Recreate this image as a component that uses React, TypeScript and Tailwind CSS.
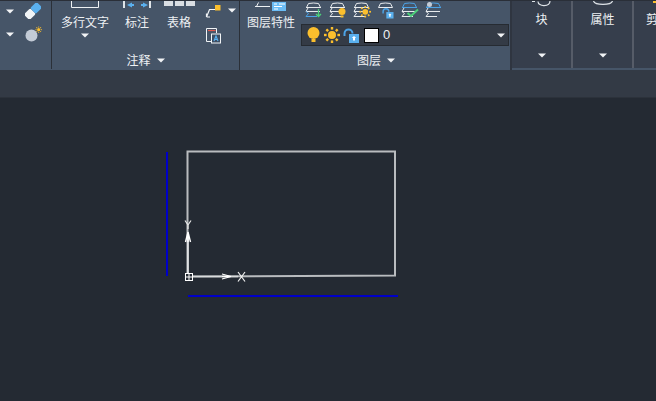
const Caret = ({ c = "" }: { c?: string }) => (
  <svg width="8" height="5" viewBox="0 0 8 5" className={`shrink-0 ${c}`}>
    <path d="M0 0.5H8L4 4.5Z" fill="#f2f4f6" />
  </svg>
);

const LayerBase = ({ blue = false, bottomBlue = false, children }: { blue?: boolean; bottomBlue?: boolean; children?: React.ReactNode }) => (
  <svg width="18" height="16" viewBox="0 0 18 16" className="shrink-0 overflow-visible">
    <path d="M1.5 5.5L3.5 1.5Q8.5 0.5 13.5 1.5L15.5 5.5" fill="none" stroke={blue ? "#4ca3e6" : "#e8ebee"} strokeWidth="1" />
    <path d="M1 5.5H16" stroke={blue ? "#4ca3e6" : "#e8ebee"} strokeWidth="1" />
    <path d="M1 9.5H15M1 9.5L3 6" stroke="#e8ebee" strokeWidth="1" fill="none" />
    <path d="M1 9.5L3.5 11.5M3.5 11.5L1 14.5H12" fill="none" stroke={bottomBlue ? "#4ca3e6" : "#e8ebee"} strokeWidth="1" />
    {children}
  </svg>
);

const Sun = () => (
  <g>
    <circle cx="8" cy="8" r="4" fill="#fbbf2d" />
    {[0, 45, 90, 135, 180, 225, 270, 315].map((a) => (
      <rect key={a} x="6.8" y="0" width="2.4" height="2.6" fill="#fbbf2d" transform={`rotate(${a} 8 8)`} />
    ))}
  </g>
);

const Lock = () => (
  <>
    <path d="M1.5 9V6.5C1.5 1 9.5 1 9.5 6.5" fill="none" stroke="#4ca3e6" strokeWidth="2" />
    <rect x="6" y="7" width="10" height="9" fill="#5ab0ee" />
    <path d="M11 9L13.2 11H12V13.5H10V11H8.8Z" fill="#fff" />
  </>
);

function App() {
  return (
    <div className="flex h-[401px] w-[656px] flex-col overflow-hidden bg-[#242a33] font-['Noto_Sans_CJK_SC','Noto_Sans',sans-serif] text-[12px] leading-[16px] text-[#eef1f4]">
      <div className="flex h-[70px] shrink-0 overflow-hidden border-t border-[#2a2f38] bg-[#465568]">
        <div className="flex h-[68px] w-[52px] shrink-0 flex-col border-r border-[#2b3038] pl-[6px]">
          <div className="flex h-[20px] items-center gap-[11px]">
            <Caret />
            <svg width="16" height="16" viewBox="0 0 16 16">
              <g transform="rotate(-45 8 8)">
                <rect x="-1" y="4" width="9" height="8" rx="1.5" fill="#f1f4f6" />
                <rect x="8" y="4" width="9" height="8" rx="1.5" fill="#5ab0ee" />
              </g>
            </svg>
          </div>
          <div className="mt-[3px] flex h-[20px] items-center gap-[11px]">
            <Caret />
            <svg width="17" height="16" viewBox="0 0 17 16">
              <circle cx="6.5" cy="9.5" r="6" fill="#c3cbd6" />
              <g transform="translate(10.5 0.5) scale(0.4)"><Sun /></g>
            </svg>
          </div>
        </div>

        <div className="flex w-[188px] shrink-0 flex-col border-r border-[#2b3038]">
          <div className="flex h-[50px] pl-[9px]">
            <div className="flex w-[48px] flex-col items-center">
              <svg width="28" height="8" viewBox="0 0 28 8" className="shrink-0">
                <path d="M0.5 0V6.5H27.5V0" fill="none" stroke="#eef1f4" />
              </svg>
              <div className="mt-[5px] whitespace-nowrap">多行文字</div>
              <Caret c="mt-[3px]" />
            </div>
            <div className="ml-[16px] flex w-[24px] flex-col items-center">
              <svg width="28" height="8" viewBox="0 0 28 8" className="mx-[-2px] shrink-0">
                <path d="M0 0H2V7H0ZM26 0H28V7H26Z" fill="#dfe4e8" />
                <path d="M4 4L9 1.5V3H11V5H9V6.5Z" fill="#5ab0ee" />
                <path d="M25 4L20 1.5V3H18V5H20V6.5Z" fill="#5ab0ee" />
              </svg>
              <div className="mt-[5px] whitespace-nowrap">标注</div>
            </div>
            <div className="ml-[18px] flex w-[24px] flex-col items-center">
              <div className="mx-[-4px] flex h-[8px] shrink-0 items-start gap-[2px]">
                <div className="h-[5px] w-[9px] bg-[#d9dee3]" />
                <div className="h-[5px] w-[9px] bg-[#d9dee3]" />
                <div className="h-[5px] w-[9px] bg-[#d9dee3]" />
              </div>
              <div className="mt-[5px] whitespace-nowrap">表格</div>
            </div>
            <div className="ml-[14px] flex flex-col">
              <div className="mt-[4px] flex h-[14px] items-start">
                <svg width="16" height="13" viewBox="0 0 16 13" className="shrink-0">
                  <path d="M11 4.5H4.5L1.5 12M1.5 12V8.5M1.5 12H5" fill="none" stroke="#f1f4f6" strokeWidth="1.2" />
                  <rect x="10" y="0" width="5.5" height="5.5" fill="#fbbf2d" />
                </svg>
                <Caret c="ml-[7px] mt-[3px]" />
              </div>
              <svg width="15" height="16" viewBox="0 0 15 16" className="ml-[1px] mt-[9px] shrink-0">
                <path d="M5 13.5H0.5V0.5H10.5V5" fill="none" stroke="#f1f4f6" />
                <path d="M2 2.5H9.5" stroke="#e2574c" strokeWidth="1.2" />
                <rect x="5.5" y="6" width="9" height="9" fill="#3e4e63" stroke="#f1f4f6" />
                <path d="M8 13L10 8L12 13M8.8 11.5H11.2" fill="none" stroke="#5ab0ee" strokeWidth="1.2" />
              </svg>
            </div>
          </div>
          <div className="flex h-[18px] items-center justify-center gap-[6px]">
            <span>注释</span>
            <Caret />
          </div>
        </div>

        <div className="flex w-[272px] shrink-0 flex-col border-r-2 border-[#2f3540]">
          <div className="flex h-[50px]">
            <div className="ml-[6px] flex w-[50px] flex-col items-center">
              <svg width="32" height="10" viewBox="0 0 32 10" className="shrink-0">
                <path d="M0 5.5H15M3.5 1.5L1.5 5.5" stroke="#eef1f4" fill="none" />
                <rect x="17" y="1" width="14" height="9" fill="#6bbcf5" />
                <path d="M19 3H22M24 3H30M19 5.5H27M19 8H23" stroke="#fff" strokeWidth="1.2" />
              </svg>
              <div className="mt-[3px] whitespace-nowrap">图层特性</div>
            </div>
            <div className="ml-[5px] flex flex-col">
              <div className="ml-[4px] flex h-[16px] gap-[6px] pt-[1px]">
                <LayerBase bottomBlue>
                  <path d="M13.5 7V14.5M11 12L13.5 14.5L16 12" fill="none" stroke="#4cd07a" strokeWidth="1.3" />
                </LayerBase>
                <LayerBase>
                  <circle cx="13" cy="9.5" r="3.5" fill="#fbbf2d" />
                  <rect x="11.5" y="13.5" width="3" height="2" fill="#fbbf2d" />
                </LayerBase>
                <LayerBase>
                  <g transform="translate(6.5 4) scale(0.72)"><Sun /></g>
                </LayerBase>
                <svg width="18" height="16" viewBox="0 0 18 16" className="shrink-0 overflow-visible">
                  <path d="M1.5 5.5L3.5 1.5Q8.5 0.5 13.5 1.5L15.5 5.5H1.5" fill="none" stroke="#e8ebee" />
                  <g transform="translate(5 5) scale(0.72)"><Lock /></g>
                </svg>
                <LayerBase blue>
                  <path d="M6.5 11L10 14L17 7.5" fill="none" stroke="#4cd07a" strokeWidth="2" />
                </LayerBase>
                <LayerBase blue>
                  <circle cx="4.5" cy="2.5" r="2.5" fill="#c3cbd6" />
                </LayerBase>
              </div>
              <div className="mt-[7px] flex h-[22px] w-[208px] items-center border border-[#262b32] bg-[#343b46] pl-[5px] pr-[3px]">
                <svg width="13" height="16" viewBox="0 0 13 16" className="shrink-0">
                  <circle cx="6.5" cy="6" r="6" fill="#fbbf2d" />
                  <rect x="4.5" y="12" width="4" height="3" fill="#fbbf2d" />
                </svg>
                <svg width="16" height="16" viewBox="0 0 16 16" className="ml-[4px] shrink-0"><Sun /></svg>
                <svg width="16" height="16" viewBox="0 0 16 16" className="ml-[3px] shrink-0"><Lock /></svg>
                <div className="ml-[5px] h-[15px] w-[15px] shrink-0 border border-black bg-white" />
                <span className="ml-[4px] font-['Liberation_Sans',sans-serif] text-[13px]">0</span>
                <Caret c="ml-auto" />
              </div>
            </div>
          </div>
          <div className="flex h-[18px] items-center justify-center gap-[6px] pl-[2px]">
            <span>图层</span>
            <Caret />
          </div>
        </div>

        {[
          { t: "块", d: "M0 0.5H3M6 0.5C6 6 18 6 18 0", w: 20 },
          { t: "属性", d: "M0.5 0C2 4.5 18 4.5 19.5 0", w: 20 },
        ].map((p) => (
          <div key={p.t} className="flex h-[67px] w-[61px] shrink-0 flex-col items-center border-r-2 border-[#565c68] bg-[#363e4c]">
            <svg width={p.w} height="6" viewBox="0 0 20 6" className="shrink-0">
              <path d={p.d} fill="none" stroke="#dfe4e8" strokeWidth="1.2" />
            </svg>
            <div className="mt-[4px]">{p.t}</div>
            <Caret c="mt-[26px]" />
          </div>
        ))}
        <div className="flex h-[67px] flex-1 flex-col bg-[#363e4c] pl-[12px]">
          <div className="h-[6px] w-[5px] self-end"><div className="h-[2px] bg-[#fbbf2d]" /></div>
          <div className="mt-[4px] whitespace-nowrap">剪</div>
        </div>
      </div>

      <div className="h-[28px] shrink-0 border-b border-[#2c323b] bg-[#333a45]" />

      <svg width="656" height="303" viewBox="0 98 656 303" className="block shrink-0">
        <path d="M167 152V276" stroke="#0000c8" strokeWidth="2" />
        <path d="M188 296H398" stroke="#0000c8" strokeWidth="2" />
        <path d="M187.5 276V151.5H395V275.5L188 276.5" fill="none" stroke="#b9bcbf" strokeWidth="2" />
        <path d="M188 277V237" stroke="#eceef0" strokeWidth="1.5" />
        <path d="M188 232L185.5 242M188 232L190.5 242M188 232V242" stroke="#fff" strokeWidth="1.4" fill="none" />
        <path d="M185 220.5L188 225L191 220.5M188 225V229" stroke="#e8e8e8" strokeWidth="1.2" fill="none" />
        <path d="M189 276.5H238" stroke="#d8dadc" strokeWidth="1.5" />
        <path d="M231 276.5L222 274M231 276.5L222 279M222 276.5H231" stroke="#fff" fill="none" strokeWidth="1.2" />
        <path d="M238 272L245 281.5M245 272L238 281.5" stroke="#f2f2f2" fill="none" strokeWidth="1.2" />
        <rect x="185.5" y="273.5" width="7" height="7" fill="#242a33" stroke="#fff" />
        <path d="M189 273.5V280.5M185.5 277H192.5" stroke="#fff" />
      </svg>
    </div>
  );
}

export default App;
